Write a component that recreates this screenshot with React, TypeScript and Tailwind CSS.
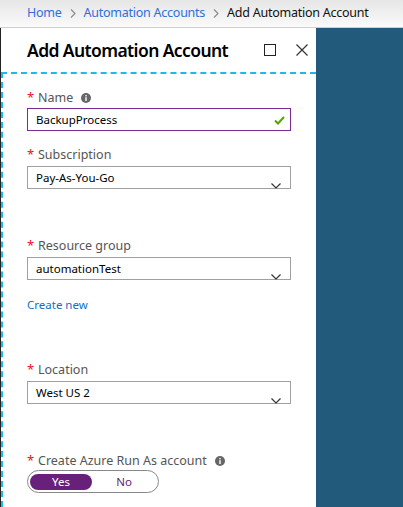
const font = { fontFamily: '"Noto Sans", "Open Sans", Arial, sans-serif' };

const Chevron = () => (
  <svg className="absolute right-[9px] bottom-[-1px]" width="10" height="6" viewBox="0 0 10 6">
    <path d="M0.5 0.5 L5 5 L9.5 0.5" fill="none" stroke="#333" strokeWidth="1.2" />
  </svg>
);

const Crumb = () => (
  <svg width="6" height="9" viewBox="0 0 6 9" className="mx-[8px]">
    <path d="M1 0.5 L5 4.5 L1 8.5" fill="none" stroke="#888" strokeWidth="1.1" />
  </svg>
);

const Info = () => (
  <svg width="10" height="10" viewBox="0 0 10 10" className="inline-block">
    <circle cx="5" cy="5" r="5" fill="#666" />
    <rect x="4.3" y="4.2" width="1.4" height="3.8" fill="#fff" />
    <rect x="4.3" y="2" width="1.4" height="1.4" fill="#fff" />
  </svg>
);

const Label = ({ text, info, className = "" }: { text: string; info?: boolean; className?: string }) => (
  <div className={`flex items-center h-[18px] text-[12.5px] text-[#555] ${className}`}>
    <span className="text-[#e81123] w-[11px] text-[13px]">*</span>
    <span>{text}</span>
    {info && <span className="ml-[8px] flex items-center"><Info /></span>}
  </div>
);

const Select = ({ value }: { value: string }) => (
  <div className="relative mt-[2px] w-[264px] h-[23px] border border-[#a0a0a0] flex items-center pl-[8px] text-[11.5px] text-black">
    {value}
    <Chevron />
  </div>
);

export default function App() {
  return (
    <div className="w-[403px] h-[507px] overflow-hidden bg-white flex flex-col" style={font}>
      <div className="h-[28px] shrink-0 bg-gradient-to-b from-[#e6e6e6] to-[#fafafa] border-b border-[#cfcfcf] flex items-center pl-[27px] text-[12.5px] tracking-[-0.25px]">
        <span className="text-[#2f6fd8]">Home</span>
        <Crumb />
        <span className="text-[#2f6fd8]">Automation Accounts</span>
        <Crumb />
        <span className="text-[#111]">Add Automation Account</span>
      </div>
      <div className="flex flex-1">
        <div className="w-[316px] border-l border-[#222] flex flex-col">
          <div className="h-[44px] shrink-0 flex items-center pl-[26px] pr-[8px]">
            <span className="text-[17.5px] font-semibold text-black tracking-[-0.6px]">Add Automation Account</span>
            <div className="ml-auto flex items-center gap-[20px] pr-[0px]">
              <div className="w-[12px] h-[12px] border border-[#222]" />
              <svg width="12" height="12" viewBox="0 0 12 12">
                <path d="M0.5 0.5 L11.5 11.5 M11.5 0.5 L0.5 11.5" stroke="#333" strokeWidth="1.2" />
              </svg>
            </div>
          </div>
          <div className="flex-1 border-t-2 border-l-2 border-dashed border-[#1eb8ea] pl-[24px] pt-[15px]">
            <Label text="Name" info />
            <div className="relative mt-[1px] w-[264px] h-[23px] border border-[#7a2b8f] flex items-center pl-[8px] text-[11.5px] text-black">
              BackupProcess
              <svg className="absolute right-[5px] top-[7px]" width="11" height="9" viewBox="0 0 11 9">
                <path d="M1 4.5 L4 7.5 L10 1" fill="none" stroke="#57a300" strokeWidth="2" />
              </svg>
            </div>
            <Label text="Subscription" className="mt-[15px]" />
            <Select value="Pay-As-You-Go" />
            <Label text="Resource group" className="mt-[48px]" />
            <Select value="automationTest" />
            <div className="mt-[16px] h-[18px] flex items-center text-[11.5px] text-[#0f6fc6]">Create new</div>
            <Label text="Location" className="mt-[47px]" />
            <Select value="West US 2" />
            <Label text="Create Azure Run As account" info className="mt-[48px]" />
            <div className="mt-[0px] w-[132px] h-[23px] border border-[#888] rounded-full flex items-center p-[2px] text-[11.5px]">
              <div className="w-[62px] h-[16px] rounded-full bg-[#68217a] text-white flex items-center justify-center">Yes</div>
              <div className="flex-1 text-[#68217a] flex items-center justify-center">No</div>
            </div>
          </div>
        </div>
        <div className="flex-1 bg-[#215a7b]" />
      </div>
    </div>
  );
}
